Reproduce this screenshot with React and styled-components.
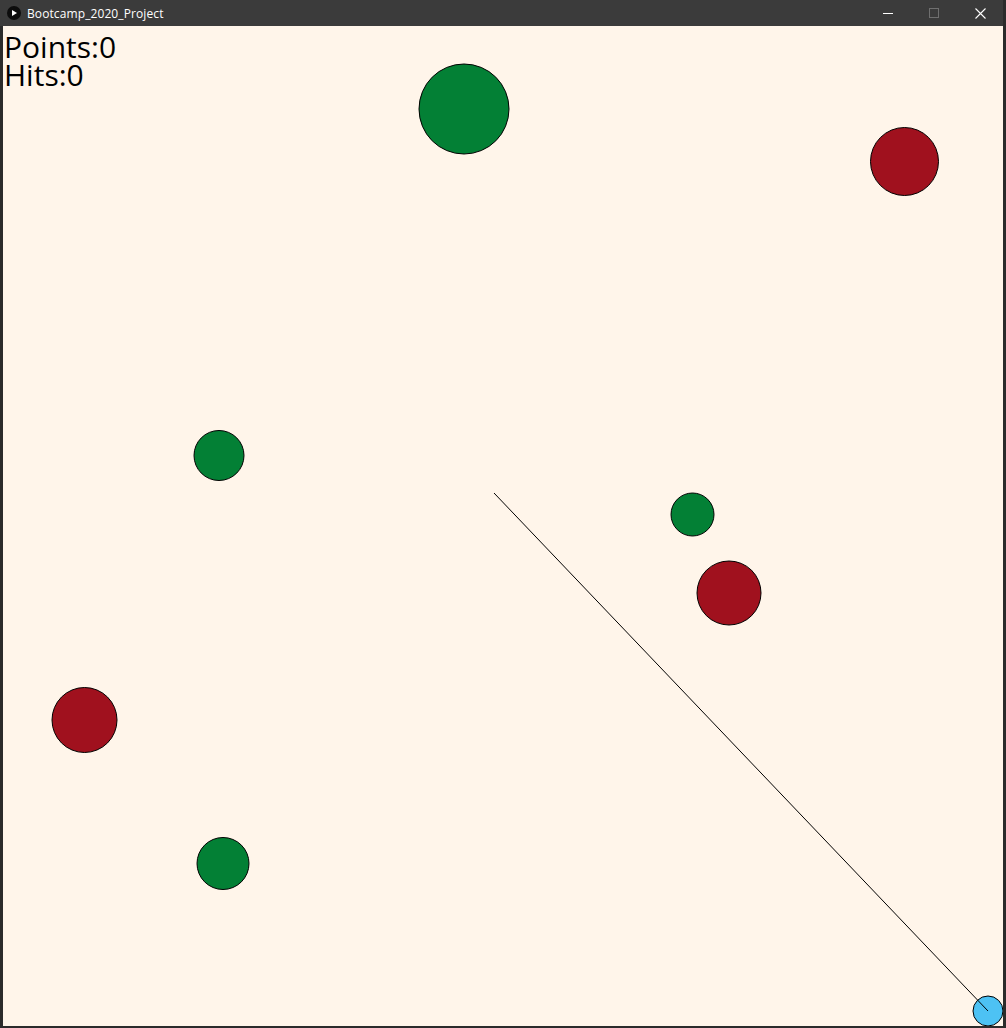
import styled, { createGlobalStyle } from "styled-components";

const GlobalStyle = createGlobalStyle`
  html, body {
    margin: 0;
    padding: 0;
    background: #2b2b2b;
    overflow: hidden;
  }
`;

const Desktop = styled.div`
  width: 1006px;
  height: 1028px;
  background: #2b2b2b;
  display: flex;
  flex-direction: column;
`;

const TitleBar = styled.div`
  height: 26px;
  width: 1003px;
  background: #3b3b3b;
  display: flex;
  align-items: center;
  font-family: "Open Sans", "Noto Sans", sans-serif;
  font-size: 12px;
  color: #ffffff;
`;

const AppIcon = styled.div`
  width: 14px;
  height: 14px;
  margin-left: 7px;
  margin-right: 6px;
  border-radius: 50%;
  background: #0d0d0d;
  display: flex;
  align-items: center;
  justify-content: center;
`;

const Title = styled.span`
  flex: 1;
  letter-spacing: 0.1px;
`;

const Controls = styled.div`
  display: flex;
  height: 100%;
`;

const ControlButton = styled.div`
  width: 46px;
  height: 26px;
  display: flex;
  align-items: center;
  justify-content: center;
  color: ${(p) => (p.$dim ? "#6f6f6f" : "#ffffff")};
`;

const Body = styled.div`
  display: flex;
  padding-left: 3px;
`;

const Canvas = styled.div`
  position: relative;
  width: 1000px;
  height: 1000px;
  background: #fff5ea;
`;

const Hud = styled.div`
  position: absolute;
  left: 1px;
  top: 0;
  display: flex;
  flex-direction: column;
  font-family: "Open Sans", "Noto Sans", sans-serif;
  font-size: 30px;
  color: #000;
  padding-top: 7px;
`;

const HudLine = styled.div`
  height: 28px;
  line-height: 28px;
  white-space: nowrap;
`;

const circles = [
  { x: 461, y: 83, r: 45, c: "#038035" },
  { x: 901.5, y: 135.5, r: 34, c: "#a0111e" },
  { x: 216, y: 429.5, r: 25, c: "#038035" },
  { x: 689.5, y: 488.5, r: 21.5, c: "#038035" },
  { x: 726, y: 567, r: 32, c: "#a0111e" },
  { x: 81.5, y: 694, r: 32.5, c: "#a0111e" },
  { x: 220, y: 837.5, r: 26, c: "#038035" },
];

export default function App() {
  return (
    <>
      <GlobalStyle />
      <Desktop>
        <TitleBar>
          <AppIcon>
            <svg width="8" height="8" viewBox="0 0 8 8">
              <path d="M2 1 L7 4 L2 7 Z" fill="#fff" />
            </svg>
          </AppIcon>
          <Title>Bootcamp_2020_Project</Title>
          <Controls>
            <ControlButton>
              <svg width="10" height="10" viewBox="0 0 10 10">
                <path d="M0 5.5 H10" stroke="currentColor" strokeWidth="1" />
              </svg>
            </ControlButton>
            <ControlButton $dim>
              <svg width="10" height="10" viewBox="0 0 10 10">
                <rect x="0.5" y="0.5" width="9" height="9" fill="none" stroke="currentColor" strokeWidth="1" />
              </svg>
            </ControlButton>
            <ControlButton>
              <svg width="11" height="11" viewBox="0 0 11 11">
                <path d="M0.5 0.5 L10.5 10.5 M10.5 0.5 L0.5 10.5" stroke="currentColor" strokeWidth="1.1" />
              </svg>
            </ControlButton>
          </Controls>
        </TitleBar>
        <Body>
          <Canvas>
            <svg width="1000" height="1000" viewBox="0 0 1000 1000">
              {circles.map((b, i) => (
                <circle key={i} cx={b.x} cy={b.y} r={b.r} fill={b.c} stroke="#000" strokeWidth="1" />
              ))}
              <circle cx="985" cy="985" r="15" fill="#4dc2f4" stroke="#000" strokeWidth="1" />
              <line x1="491" y1="467" x2="985" y2="985" stroke="#000" strokeWidth="1" />
            </svg>
            <Hud>
              <HudLine>Points:0</HudLine>
              <HudLine>Hits:0</HudLine>
            </Hud>
          </Canvas>
        </Body>
      </Desktop>
    </>
  );
}
